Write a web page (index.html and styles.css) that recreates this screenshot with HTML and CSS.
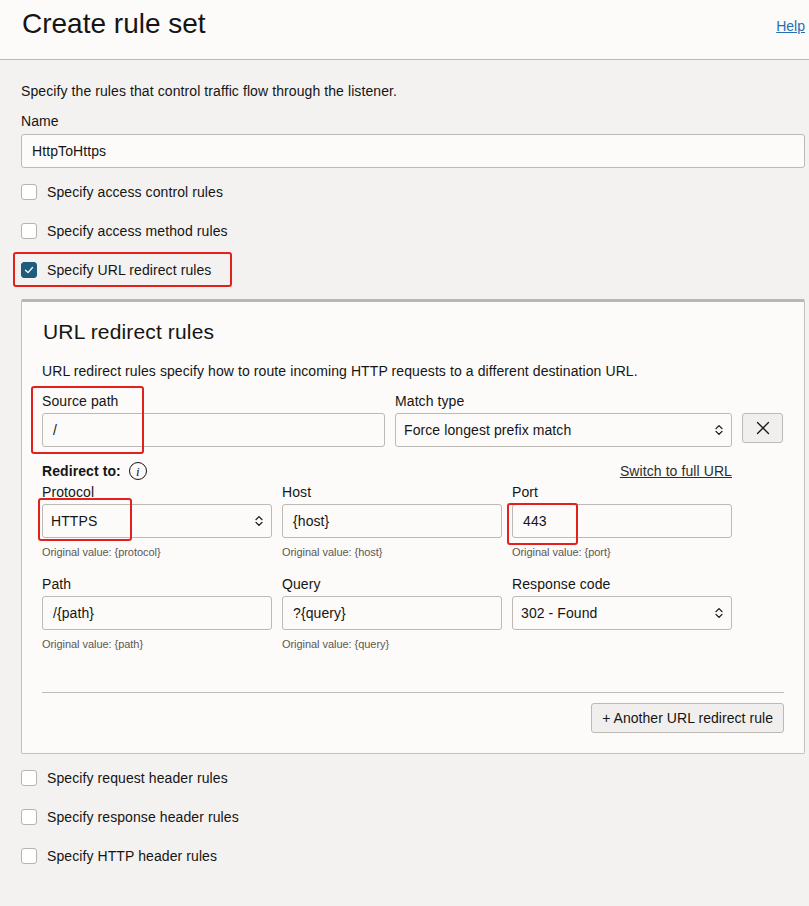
FILE: index.html
```html
<!DOCTYPE html>
<html lang="en">
<head>
<meta charset="utf-8">
<title>Create rule set</title>
<link rel="stylesheet" href="styles.css">
</head>
<body>
<header class="page-header">
  <h1 class="title">Create rule set</h1>
  <a class="help" href="#">Help</a>
</header>
<main class="content">
  <p class="intro">Specify the rules that control traffic flow through the listener.</p>
  <div class="field name-field">
    <div class="label">Name</div>
    <div class="input">HttpToHttps</div>
  </div>

  <div class="checks">
    <div class="check-row"><span class="box"></span><span>Specify access control rules</span></div>
    <div class="check-row"><span class="box"></span><span>Specify access method rules</span></div>
    <div class="check-row"><span class="box checked"><svg viewBox="0 0 16 16" width="16" height="16"><path d="M4 8.3 L6.9 11 L12 5.2" fill="none" stroke="#fff" stroke-width="1.5" stroke-linecap="round" stroke-linejoin="round"/></svg></span><span>Specify URL redirect rules</span><span class="mark mark-check"></span></div>
  </div>

  <section class="panel">
    <h2 class="panel-title">URL redirect rules</h2>
    <p class="panel-desc">URL redirect rules specify how to route incoming HTTP requests to a different destination URL.</p>

    <div class="source-grid">
      <div class="field">
        <div class="label">Source path</div>
        <div class="input">/</div>
        <span class="mark mark-source"></span>
      </div>
      <div class="field">
        <div class="label">Match type</div>
        <div class="input select"><span>Force longest prefix match</span><svg class="chev" viewBox="0 0 8 12" width="8" height="12"><path d="M1 4.6 L4 1.6 L7 4.6 M1 7.4 L4 10.4 L7 7.4" fill="none" stroke="#161513" stroke-width="1.3" stroke-linecap="round" stroke-linejoin="round"/></svg></div>
      </div>
      <button class="icon-btn" type="button" aria-label="Remove"><svg viewBox="0 0 14 14" width="14" height="14"><path d="M1.5 1.5 L12.5 12.5 M12.5 1.5 L1.5 12.5" stroke="#161513" stroke-width="1.3" stroke-linecap="round"/></svg></button>
    </div>

    <div class="redirect-row">
      <div class="redirect-label"><strong>Redirect to:</strong><span class="info">i</span></div>
      <a class="switch" href="#">Switch to full URL</a>
    </div>

    <div class="target-grid">
      <div class="field">
        <div class="label">Protocol</div>
        <div class="input select"><span>HTTPS</span><svg class="chev" viewBox="0 0 8 12" width="8" height="12"><path d="M1 4.6 L4 1.6 L7 4.6 M1 7.4 L4 10.4 L7 7.4" fill="none" stroke="#161513" stroke-width="1.3" stroke-linecap="round" stroke-linejoin="round"/></svg><span class="mark mark-protocol"></span></div>
        <div class="hint">Original value: {protocol}</div>
      </div>
      <div class="field">
        <div class="label">Host</div>
        <div class="input">{host}</div>
        <div class="hint">Original value: {host}</div>
      </div>
      <div class="field">
        <div class="label">Port</div>
        <div class="input">443<span class="mark mark-port"></span></div>
        <div class="hint">Original value: {port}</div>
      </div>
      <div class="field">
        <div class="label">Path</div>
        <div class="input">/{path}</div>
        <div class="hint">Original value: {path}</div>
      </div>
      <div class="field">
        <div class="label">Query</div>
        <div class="input">?{query}</div>
        <div class="hint">Original value: {query}</div>
      </div>
      <div class="field">
        <div class="label">Response code</div>
        <div class="input select"><span>302 - Found</span><svg class="chev" viewBox="0 0 8 12" width="8" height="12"><path d="M1 4.6 L4 1.6 L7 4.6 M1 7.4 L4 10.4 L7 7.4" fill="none" stroke="#161513" stroke-width="1.3" stroke-linecap="round" stroke-linejoin="round"/></svg></div>
      </div>
    </div>

    <hr class="divider">
    <div class="panel-actions">
      <button class="btn" type="button">+ Another URL redirect rule</button>
    </div>
  </section>

  <div class="checks checks-after">
    <div class="check-row"><span class="box"></span><span>Specify request header rules</span></div>
    <div class="check-row"><span class="box"></span><span>Specify response header rules</span></div>
    <div class="check-row"><span class="box"></span><span>Specify HTTP header rules</span></div>
  </div>
</main>
</body>
</html>
```

FILE: styles.css
```css
* { box-sizing: border-box; }

html, body {
  margin: 0;
  padding: 0;
}

body {
  background: #f3f2f1;
  color: #161513;
  font-family: "Liberation Sans", Arial, sans-serif;
  font-size: 14px;
  line-height: 20px;
  letter-spacing: 0.09px;
  min-height: 906px;
}

.page-header {
  height: 60px;
  background: #fcfbfa;
  border-bottom: 1px solid #bcb8b4;
  display: flex;
  justify-content: space-between;
  align-items: flex-start;
  padding: 8px 4px 0 22px;
}

.title {
  margin: 0;
  font-size: 28px;
  line-height: 32px;
  font-weight: normal;
  letter-spacing: 0;
  color: #161513;
}

.help {
  margin-top: 8px;
  color: #1f6fb2;
  text-decoration: underline;
  font-size: 14px;
  letter-spacing: 0;
}

.content {
  padding: 21px 4px 0 21px;
}

.intro {
  margin: 0;
}

.field {
  position: relative;
  display: flex;
  flex-direction: column;
}

.name-field {
  margin-top: 10px;
}

.label {
  line-height: 20px;
  margin-bottom: 2px;
}

.name-field .label {
  margin-bottom: 3px;
}

.input {
  position: relative;
  height: 34px;
  background: #fcfbfa;
  border: 1px solid #bdb9b4;
  border-radius: 3px;
  padding: 0 10px;
  display: flex;
  align-items: center;
}

.input.select {
  padding: 0 8px;
  justify-content: space-between;
}

.chev {
  flex: none;
}

.checks {
  margin-top: 12px;
  display: flex;
  flex-direction: column;
  gap: 15px;
}

.check-row {
  position: relative;
  height: 24px;
  display: flex;
  align-items: center;
  gap: 10px;
}

.box {
  width: 16px;
  height: 16px;
  border: 1px solid #b7b3ae;
  border-radius: 3px;
  background: #fffffe;
  display: flex;
  align-items: center;
  justify-content: center;
}

.box.checked {
  background: #1f5b7a;
  border-color: #1f5b7a;
}

.box svg {
  display: block;
}

.mark {
  position: absolute;
  border: 2px solid #e3211c;
  border-radius: 3px;
  pointer-events: none;
}

.mark-check {
  left: -8px;
  top: -6px;
  width: 219px;
  height: 35px;
}

.mark-source {
  left: -11px;
  top: -5px;
  width: 113px;
  height: 68px;
}

.mark-protocol {
  left: -5px;
  top: -7px;
  width: 94px;
  height: 43px;
}

.mark-port {
  left: -6px;
  top: -2px;
  width: 71px;
  height: 42px;
}

.panel {
  margin-top: 17px;
  background: #fcfbfa;
  border: 1px solid #c4c0bb;
  border-top: 3px solid #bab6b1;
  border-radius: 2px;
  padding: 16px 20px 20px 20px;
}

.panel-title {
  margin: 0;
  padding-left: 1px;
  font-size: 21px;
  line-height: 28px;
  font-weight: normal;
  letter-spacing: 0.15px;
}

.panel-desc {
  margin: 15px 0 0 0;
}

.source-grid {
  margin-top: 10px;
  display: grid;
  grid-template-columns: 343px 337px 41px;
  column-gap: 10px;
  align-items: start;
}

.icon-btn {
  margin-top: 22px;
  width: 41px;
  height: 30px;
  padding: 0;
  background: #f1efed;
  border: 1px solid #bdb9b4;
  border-radius: 3px;
  display: flex;
  align-items: center;
  justify-content: center;
}

.redirect-row {
  margin-top: 14px;
  width: 690px;
  display: flex;
  justify-content: space-between;
  align-items: center;
  height: 20px;
}

.redirect-label {
  display: flex;
  align-items: center;
}

.redirect-label strong {
  font-weight: bold;
}

.info {
  margin-left: 8px;
  width: 18px;
  height: 18px;
  border: 1.3px solid #161513;
  border-radius: 50%;
  display: flex;
  align-items: center;
  justify-content: center;
  font-family: "Liberation Serif", "Times New Roman", serif;
  font-style: italic;
  font-size: 13px;
  line-height: 1;
  letter-spacing: 0;
}

.switch {
  color: #312d2a;
  text-decoration: underline;
}

.target-grid {
  margin-top: 1px;
  display: grid;
  grid-template-columns: 230px 220px 220px;
  column-gap: 10px;
  row-gap: 15px;
  align-items: start;
}

.hint {
  margin-top: 7px;
  font-size: 11px;
  line-height: 14px;
  letter-spacing: -0.05px;
  color: #5c5752;
}

.divider {
  margin: 41px 0 0 0;
  border: 0;
  border-top: 1px solid #bdb9b4;
  height: 0;
}

.panel-actions {
  margin-top: 10px;
  display: flex;
  justify-content: flex-end;
}

.btn {
  height: 30px;
  padding: 0 10px;
  background: #f1efed;
  border: 1px solid #bdb9b4;
  border-radius: 3px;
  font-family: "Liberation Sans", Arial, sans-serif;
  font-size: 14px;
  letter-spacing: 0.05px;
  color: #161513;
}

.checks-after {
  margin-top: 12px;
}
```
